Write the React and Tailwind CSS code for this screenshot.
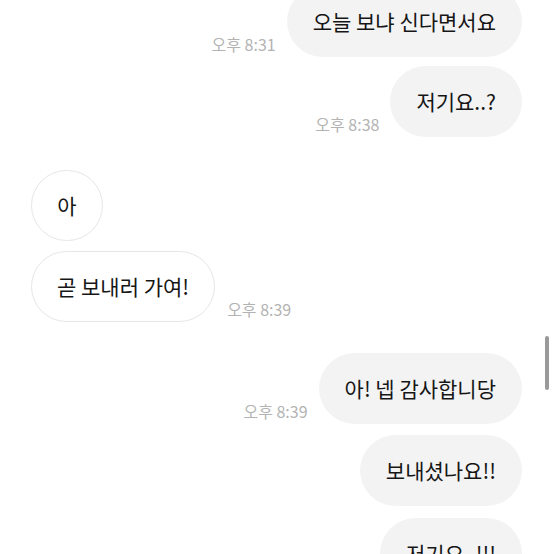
const messages = [
  { id: 1, side: 'me', text: '오늘 보냐 신다면서요', time: '오후 8:31', mt: 'mt-[-14px]' },
  { id: 2, side: 'me', text: '저기요..?', time: '오후 8:38', mt: 'mt-[9px]' },
  { id: 3, side: 'them', text: '아', mt: 'mt-[33px]', round: true },
  { id: 4, side: 'them', text: '곧 보내러 가여!', time: '오후 8:39', mt: 'mt-[10px]' },
  { id: 5, side: 'me', text: '아! 넵 감사합니당', time: '오후 8:39', mt: 'mt-[31px]' },
  { id: 6, side: 'me', text: '보내셨나요!!', mt: 'mt-[11px]' },
  { id: 7, side: 'me', text: '저기요..!!!', mt: 'mt-[12px]' },
];

function Time({ children }) {
  return (
    <span className="mb-[4px] text-[16px] leading-[18px] text-[#b3b3b3] whitespace-nowrap">
      {children}
    </span>
  );
}

function Row({ msg }) {
  const mine = msg.side === 'me';
  const bubble = mine
    ? 'bg-[#f3f3f3] px-[26px]'
    : msg.round
      ? 'bg-white border border-[#e6e6e6] w-[72px] justify-center'
      : 'bg-white border border-[#e6e6e6] px-[25px]';

  return (
    <div className={`flex items-end ${mine ? 'justify-end gap-[11px]' : 'justify-start gap-[12px]'} ${msg.mt}`}>
      {mine && msg.time && <Time>{msg.time}</Time>}
      <div className={`h-[71px] flex items-center rounded-full text-[21px] text-[#161616] whitespace-nowrap ${bubble}`}>
        {msg.text}
      </div>
      {!mine && msg.time && <Time>{msg.time}</Time>}
    </div>
  );
}

export default function App() {
  return (
    <div
      className="relative h-[554px] w-[554px] overflow-hidden bg-white"
      style={{ fontFamily: '"Noto Sans CJK KR", "Noto Sans", sans-serif' }}
    >
      <div className="flex flex-col pl-[31px] pr-[32px]">
        {messages.map((m) => (
          <Row key={m.id} msg={m} />
        ))}
      </div>
      {/* scroll indicator */}
      <div className="absolute left-[545px] top-[336px] h-[54px] w-[4px] rounded-full bg-[#9a9a9a]" />
    </div>
  );
}
